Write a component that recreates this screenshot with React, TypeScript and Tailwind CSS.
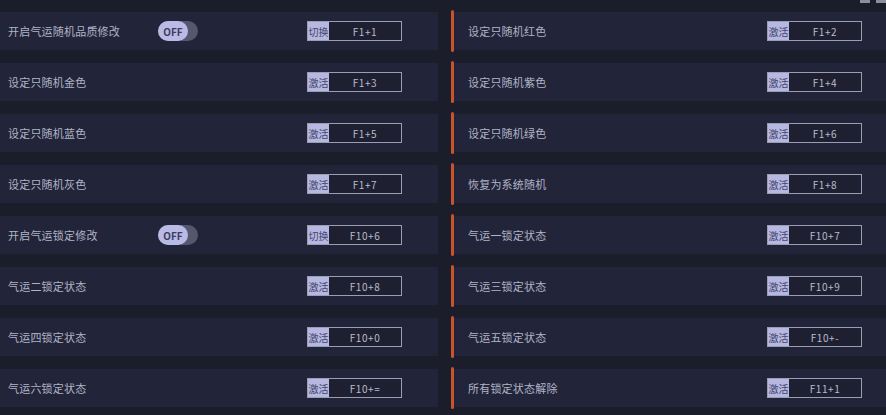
import React from 'react';

type Item = { label: string; key: string; toggle?: boolean };

const rows: [Item, Item][] = [
    [{ label: '开启气运随机品质修改', key: 'F1+1', toggle: true }, { label: '设定只随机红色', key: 'F1+2' }],
    [{ label: '设定只随机金色', key: 'F1+3' }, { label: '设定只随机紫色', key: 'F1+4' }],
    [{ label: '设定只随机蓝色', key: 'F1+5' }, { label: '设定只随机绿色', key: 'F1+6' }],
    [{ label: '设定只随机灰色', key: 'F1+7' }, { label: '恢复为系统随机', key: 'F1+8' }],
    [{ label: '开启气运锁定修改', key: 'F10+6', toggle: true }, { label: '气运一锁定状态', key: 'F10+7' }],
    [{ label: '气运二锁定状态', key: 'F10+8' }, { label: '气运三锁定状态', key: 'F10+9' }],
    [{ label: '气运四锁定状态', key: 'F10+0' }, { label: '气运五锁定状态', key: 'F10+-' }],
    [{ label: '气运六锁定状态', key: 'F10+=' }, { label: '所有锁定状态解除', key: 'F11+1' }],
];

function KeyBox({ item }: { item: Item }) {
    return (
        <div className="flex h-[20px] w-[95px] border border-[#9b9db3] bg-[#1e2031]">
            <span className="flex w-[21px] items-center justify-center bg-[#b6b8e2] text-[10px] text-[#44466a]">
                {item.toggle ? '切换' : '激活'}
            </span>
            <span className="flex flex-1 items-center justify-center text-[10px] tracking-[0.6px] text-[#b9bbcc]">
                {item.key}
            </span>
        </div>
    );
}

function Toggle() {
    return (
        <div className="flex h-[20px] w-[40px] items-center rounded-full bg-[#55586d]">
            <div className="flex h-[20px] w-[30px] items-center justify-center rounded-full bg-[#b9bbe6] text-[10px] font-semibold text-[#3b3d5e]">
                OFF
            </div>
        </div>
    );
}

export default function App() {
    return (
        <div
            className="relative h-[415px] w-[886px] overflow-hidden bg-[#1b1d2a] pt-3"
            style={{ fontFamily: '"Noto Sans CJK SC", "Noto Sans", sans-serif' }}
        >
            <div className="absolute right-0 top-0 flex gap-[6px]">
                <div className="h-[3px] w-[10px] bg-[#8c8e9c]" />
                <div className="h-[3px] w-[10px] bg-[#8c8e9c]" />
            </div>
            <div className="flex flex-col gap-[13px]">
                {rows.map(([l, r], i) => (
                    <div key={i} className="flex h-[38px]">
                        <div className="flex w-[438px] items-center bg-[#22253a] pl-2 pr-[36px]">
                            <span className="w-[150px] shrink-0 text-[11px] tracking-[0.2px] text-[#b1b4c6]">{l.label}</span>
                            {l.toggle && <Toggle />}
                            <div className="ml-auto">
                                <KeyBox item={l} />
                            </div>
                        </div>
                        <div className="w-[13px]" />
                        <div className="-my-[2px] w-[3px] rounded-full bg-[#c9532a]" />
                        <div className="flex flex-1 items-center bg-[#22253a] pl-[14px] pr-[24px]">
                            <span className="text-[11px] tracking-[0.2px] text-[#b1b4c6]">{r.label}</span>
                            <div className="ml-auto">
                                <KeyBox item={r} />
                            </div>
                        </div>
                    </div>
                ))}
            </div>
        </div>
    );
}
